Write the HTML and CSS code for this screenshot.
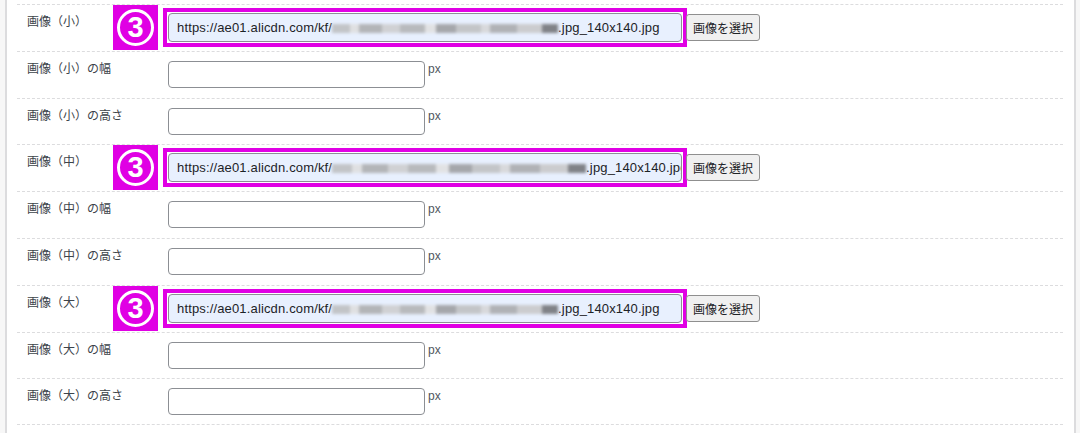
FILE: index.html
```html
<!DOCTYPE html>
<html>
	<head>
		<title>画像設定</title>
		<meta charset="utf-8">
		<link rel="stylesheet" href="styles.css">
	</head>
	<body>
		<div class="panel">
			<div class="form_rows">

				<!-- 小 -->
				<div class="row">
					<div class="th">
						<span class="label">画像（小）</span>
						<span class="badge"><span class="num">3</span></span>
					</div>
					<div class="mark">
						<div class="url_field">https://ae01.alicdn.com/kf/<span class="blur b1"></span>.jpg_140x140.jpg</div>
					</div>
					<button class="pick" type="button">画像を選択</button>
				</div>
				<div class="row">
					<div class="th"><span class="label">画像（小）の幅</span></div>
					<input class="num_field" type="text">
					<span class="unit">px</span>
				</div>
				<div class="row">
					<div class="th"><span class="label">画像（小）の高さ</span></div>
					<input class="num_field" type="text">
					<span class="unit">px</span>
				</div>

				<!-- 中 -->
				<div class="row">
					<div class="th">
						<span class="label">画像（中）</span>
						<span class="badge"><span class="num">3</span></span>
					</div>
					<div class="mark">
						<div class="url_field">https://ae01.alicdn.com/kf/<span class="blur b2"></span>.jpg_140x140.jpg</div>
					</div>
					<button class="pick" type="button">画像を選択</button>
				</div>
				<div class="row">
					<div class="th"><span class="label">画像（中）の幅</span></div>
					<input class="num_field" type="text">
					<span class="unit">px</span>
				</div>
				<div class="row">
					<div class="th"><span class="label">画像（中）の高さ</span></div>
					<input class="num_field" type="text">
					<span class="unit">px</span>
				</div>

				<!-- 大 -->
				<div class="row">
					<div class="th">
						<span class="label">画像（大）</span>
						<span class="badge"><span class="num">3</span></span>
					</div>
					<div class="mark">
						<div class="url_field">https://ae01.alicdn.com/kf/<span class="blur b3"></span>.jpg_140x140.jpg</div>
					</div>
					<button class="pick" type="button">画像を選択</button>
				</div>
				<div class="row">
					<div class="th"><span class="label">画像（大）の幅</span></div>
					<input class="num_field" type="text">
					<span class="unit">px</span>
				</div>
				<div class="row last">
					<div class="th"><span class="label">画像（大）の高さ</span></div>
					<input class="num_field" type="text">
					<span class="unit">px</span>
				</div>

			</div>
		</div>
	</body>
</html>
```

FILE: styles.css
```css
html, body {
	margin: 0;
	padding: 0;
	height: 100%;
}
body {
	background-color: #f7f7f7;
	font-family: "Liberation Sans", "Noto Sans CJK JP", sans-serif;
	color: #3c434a;
	overflow: hidden;
}

.panel {
	box-sizing: border-box;
	width: 1071px;
	height: 100%;
	margin-left: 5px;
	background-color: #fff;
	border-left: 2px solid #dcdcde;
	border-right: 2px solid #dcdcde;
	padding: 4px 11px 0 10px;
}

.row {
	box-sizing: border-box;
	height: 46.8px;
	border-top: 1px dashed #dcdcde;
	display: flex;
	align-items: flex-start;
}
.row.last {
	border-bottom: 1px dashed #dcdcde;
}

.th {
	box-sizing: border-box;
	width: 151px;
	flex-shrink: 0;
	padding: 0 10px;
	display: flex;
	align-items: flex-start;
}
.label {
	margin-top: 9px;
	font-size: 12px;
	line-height: 17px;
	white-space: nowrap;
}

/* 注釈の番号 */
.badge {
	margin-left: auto;
	width: 45px;
	height: 45px;
	background-color: #e000e4;
	display: flex;
	align-items: center;
	justify-content: center;
}
.badge .num {
	box-sizing: border-box;
	width: 37px;
	height: 37px;
	border: 3px solid #fff;
	border-radius: 50%;
	color: #fff;
	font: bold 29px/31px "Liberation Sans", sans-serif;
	text-align: center;
}

/* 注釈の枠 */
.mark {
	margin: 3px 0 0 -5px;
	padding: 1px;
	border: 4px solid #e000e4;
}

.url_field {
	box-sizing: border-box;
	width: 514px;
	height: 29px;
	padding: 0 8px;
	background-color: #e8f0fe;
	border: 1px solid #8c8f94;
	border-radius: 4px;
	font-size: 13px;
	letter-spacing: 0.15px;
	line-height: 27px;
	color: #1d2327;
	white-space: nowrap;
	overflow: hidden;
}

/* ぼかし部分 */
.blur {
	display: inline-block;
	height: 9px;
	vertical-align: -1px;
	filter: blur(1.6px);
	background: linear-gradient(to right,
		#c2c4c7 0, #c2c4c7 8%, #dfe0e2 8%, #dfe0e2 12%,
		#b3b5b8 12%, #b3b5b8 22%, #d0d1d4 22%, #d0d1d4 30%,
		#b8babd 30%, #b8babd 41%, #e1e2e4 41%, #e1e2e4 46%,
		#a5a7ab 46%, #a5a7ab 55%, #c3c5c8 55%, #c3c5c8 66%,
		#d8d9dc 66%, #d8d9dc 70%, #b0b2b6 70%, #b0b2b6 82%,
		#cbcccf 82%, #cbcccf 93%, #808287 93%, #808287 100%);
}
.blur.b1 {
	width: 226px;
}
.blur.b2 {
	width: 254px;
}
.blur.b3 {
	width: 226px;
}

.pick {
	box-sizing: border-box;
	height: 27px;
	margin: 9px 0 0 -1px;
	padding: 0 6px;
	background-color: #f0f0f0;
	border: 1px solid #8f8f8f;
	border-radius: 3px;
	font-family: "Liberation Sans", "Noto Sans CJK JP", sans-serif;
	font-size: 12px;
	color: #1d2327;
}

.num_field {
	box-sizing: border-box;
	width: 257px;
	height: 27px;
	margin: 9px 0 0 0;
	padding: 0 8px;
	background-color: #fff;
	border: 1px solid #8c8f94;
	border-radius: 4px;
}
.unit {
	margin: 9px 0 0 3px;
	font-size: 12px;
	line-height: 17px;
	color: #50575e;
}
```
